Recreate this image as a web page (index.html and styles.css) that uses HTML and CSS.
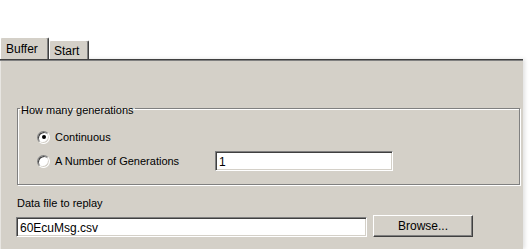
FILE: index.html
```html
<!DOCTYPE html>
<html>
<head>
<meta charset="utf-8">
<link rel="stylesheet" href="styles.css">
</head>
<body>
<div class="top"></div>
<div class="tabs">
  <div class="tab active">Buffer</div>
  <div class="tab">Start</div>
</div>
<div class="panel">
  <fieldset class="group">
    <legend>How many generations</legend>
    <div class="grid">
      <div class="opt"><span class="radio checked"></span><span>Continuous</span></div>
      <div></div>
      <div class="opt"><span class="radio"></span><span>A Number of Generations</span></div>
      <div class="field small">1</div>
    </div>
  </fieldset>
  <div class="label">Data file to replay</div>
  <div class="filerow">
    <div class="field wide">60EcuMsg.csv</div>
    <div class="button">Browse...</div>
  </div>
</div>
</body>
</html>
```
FILE: styles.css
```css
html, body {
  margin: 0;
  padding: 0;
  background: #ffffff;
  width: 529px;
  height: 249px;
  overflow: hidden;
  font-family: "Liberation Sans", Arial, sans-serif;
  font-size: 11px;
  color: #000;
}
.top {
  height: 37px;
}
.tabs {
  display: flex;
  align-items: flex-end;
  height: 22px;
}
.tab {
  box-sizing: border-box;
  height: 19px;
  width: 40px;
  background: #d4d0c8;
  border-left: 1px solid #ffffff;
  border-top: 1px solid #ffffff;
  border-right: 1px solid #404040;
  box-shadow: inset -1px 0 #808080;
  border-radius: 2px 2px 0 0;
  padding: 3px 0 0 4px;
  font-size: 12px;
}
.tab.active {
  height: 22px;
  width: 49px;
  padding: 4px 0 0 5px;
}
.panel {
  box-sizing: border-box;
  width: 523px;
  height: 190px;
  background: #d4d0c8;
  border-top: 1px solid #404040;
  box-shadow: inset 0 1px #808080, inset 1px 0 #e8e6e2, 2px 0 4px rgba(0,0,0,0.12);
  padding: 0 0 0 17px;
  display: flex;
  flex-direction: column;
}
.group {
  margin: 42px 0 0 0;
  width: 503px;
  box-sizing: border-box;
  border: 1px solid #808080;
  box-shadow: inset 1px 1px #ffffff, 1px 1px #ffffff;
  padding: 12px 0 13px 19px;
}
.group legend {
  padding: 0 1px 0 1px;
  margin-left: -17px;
  line-height: 13px;
  position: relative;
  top: 2px;
}
.grid {
  display: grid;
  grid-template-columns: 178px 178px;
  grid-auto-rows: 20px;
  row-gap: 4px;
  align-items: center;
}
.opt {
  display: flex;
  align-items: center;
  gap: 5px;
}
.radio {
  box-sizing: border-box;
  width: 13px;
  height: 13px;
  border-radius: 50%;
  background: #ffffff;
  border: 1px solid;
  border-color: #808080 #ffffff #ffffff #808080;
  box-shadow: inset 1px 1px #404040, inset -1px -1px #d4d0c8;
  display: flex;
  align-items: center;
  justify-content: center;
}
.radio.checked::after {
  content: "";
  width: 4px;
  height: 4px;
  border-radius: 50%;
  background: #000;
}
.field {
  box-sizing: border-box;
  height: 20px;
  background: #ffffff;
  border: 1px solid;
  border-color: #808080 #ffffff #ffffff #808080;
  box-shadow: inset 1px 1px #404040, inset -1px -1px #d4d0c8;
  padding: 3px 0 0 3px;
  font-size: 12px;
  line-height: 14px;
}
.field.small {
  width: 178px;
}
.label {
  margin-top: 11px;
  line-height: 14px;
}
.filerow {
  display: flex;
  align-items: flex-end;
  gap: 6px;
  margin-top: 5px;
  margin-left: -1px;
}
.field.wide {
  width: 351px;
}
.button {
  box-sizing: border-box;
  width: 100px;
  height: 22px;
  background: #d4d0c8;
  border: 1px solid;
  border-color: #ffffff #404040 #404040 #ffffff;
  box-shadow: inset -1px -1px #808080;
  display: flex;
  align-items: center;
  justify-content: center;
  font-size: 12px;
}
```
